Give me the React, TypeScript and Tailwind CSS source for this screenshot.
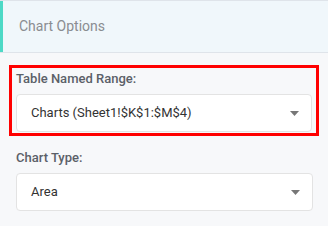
import React from "react";

function Arrow() {
  return (
    <svg width="9" height="5" viewBox="0 0 9 5" className="shrink-0">
      <path d="M0 0 L9 0 L4.5 5 Z" fill="#777" />
    </svg>
  );
}

function Select({ value }: { value: string }) {
  return (
    <div className="h-[38px] bg-white border border-[#e3e3e3] rounded-[4px] flex items-center justify-between pl-[14px] pr-[12px]">
      <span className="text-[13px] text-[#333]">{value}</span>
      <Arrow />
    </div>
  );
}

export default function App() {
  return (
    <div className="w-[328px] h-[226px] bg-[#f7f8fa] font-['Roboto',sans-serif] overflow-hidden">
      <div className="h-[53px] bg-[#f0f7fb] border-t border-b border-[#dfe4ea] flex items-center">
        <div className="w-[3px] h-full bg-[#4dd9c6]" />
        <span className="pl-[16px] text-[14px] text-[#8a8d91]">Chart Options</span>
      </div>
      <div className="px-[9px] pt-[12px]">
        <div className="border-[3px] border-[#ff0000] px-[4px] pt-[1px] pb-[1px]">
          <div className="h-[20px] leading-[20px] text-[13px] font-medium text-[#5b6068] mb-[5px]">
            Table Named Range:
          </div>
          <Select value="Charts (Sheet1!$K$1:$M$4)" />
        </div>
      </div>
      <div className="pl-[16px] pr-[15px] pt-[12px]">
        <div className="h-[20px] leading-[20px] text-[13px] font-medium text-[#5b6068] mb-[5px]">
          Chart Type:
        </div>
        <Select value="Area" />
      </div>
    </div>
  );
}
